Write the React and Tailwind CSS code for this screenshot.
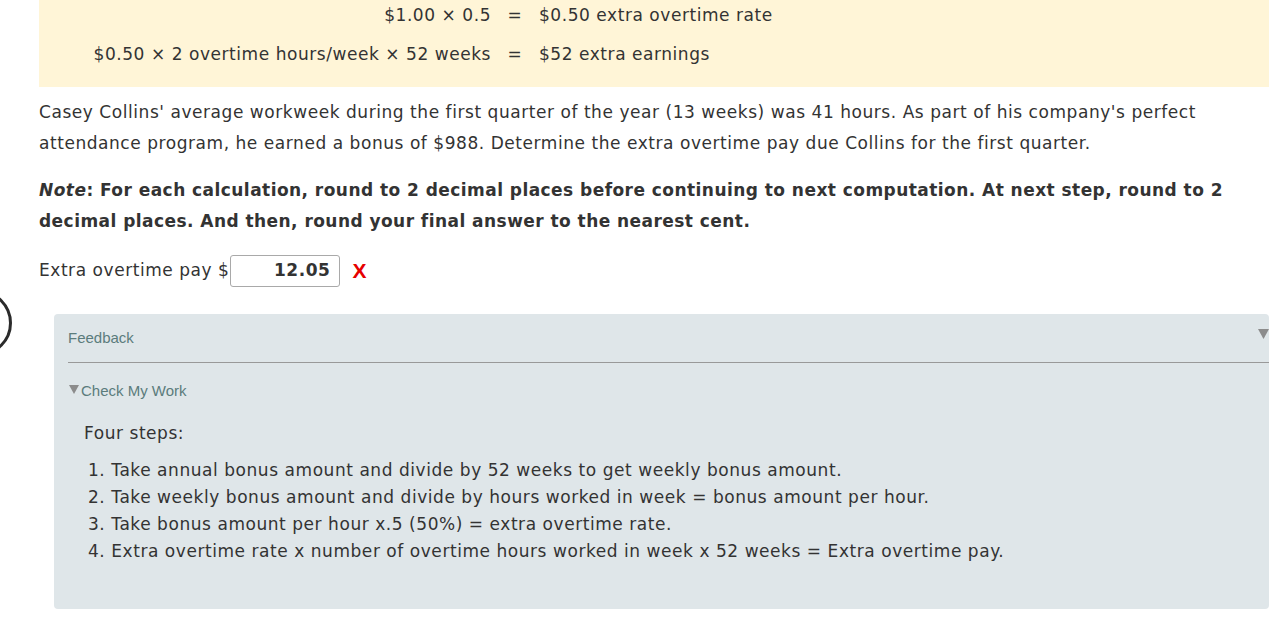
export default function App() {
  const v = { fontFamily: '"DejaVu Sans", Verdana, sans-serif' };
  const a = { fontFamily: '"Liberation Sans", Arial, sans-serif' };
  return (
    <div className="relative w-[1269px] h-[618px] overflow-hidden bg-white text-[#333] tracking-[0.55px]" style={v}>
      <div className="ml-[39px] h-[87px] bg-[#fff5d7] pt-[4px] text-[17px]">
        <div className="grid grid-cols-[452px_48px_auto] gap-y-[17px] leading-[22px]">
          <div className="text-right">$1.00 × 0.5</div>
          <div className="text-center">=</div>
          <div>$0.50 extra overtime rate</div>
          <div className="text-right">$0.50 × 2 overtime hours/week × 52 weeks</div>
          <div className="text-center">=</div>
          <div>$52 extra earnings</div>
        </div>
      </div>
      <div className="pl-[39px] pr-[30px] text-[17px]">
        <p className="mt-[10px] leading-[31px]">
          Casey Collins' average workweek during the first quarter of the year (13 weeks) was 41 hours. As part of his company's perfect attendance program, he earned a bonus of $988. Determine the extra overtime pay due Collins for the first quarter.
        </p>
        <p className="mt-[16px] leading-[31px] font-bold tracking-[0.45px]">
          <em>Note</em>: For each calculation, round to 2 decimal places before continuing to next computation. At next step, round to 2 decimal places. And then, round your final answer to the nearest cent.
        </p>
        <div className="mt-[18px] flex items-center h-[32px]">
          <span>Extra overtime pay $</span>
          <div className="w-[110px] h-[32px] border border-[#a9a9a9] rounded-[3px] flex items-center justify-end pr-[8px] font-bold">12.05</div>
          <span className="ml-[13px] text-[#e60000] font-bold text-[21px] tracking-normal" style={a}>X</span>
        </div>
      </div>
      <div className="absolute left-[-54px] top-[290px] w-[66px] h-[66px] rounded-full border-[3px] border-[#2b2b2b]"></div>
      <div className="ml-[54px] mt-[27px] h-[295px] bg-[#dfe6e9] rounded-[4px] pl-[14px] pt-[14px]">
        <div className="flex items-center justify-between h-[20px] text-[15px] tracking-normal text-[#5b7c7c]" style={a}>
          <span>Feedback</span>
          <svg width="11" height="10" viewBox="0 0 11 10" className="mr-0 mt-[-9px]">
            <polygon points="0,0 11,0 5.5,10" fill="#8c8c8c" />
          </svg>
        </div>
        <div className="mt-[14px] border-t border-[#999]"></div>
        <div className="mt-[18px] flex items-center text-[15px] tracking-normal text-[#5b7c7c] h-[20px]" style={a}>
          <svg width="10" height="9" viewBox="0 0 10 9" className="mr-[2px] ml-[1px] mt-[-4px]">
            <polygon points="0,0 10,0 5,9" fill="#8c8c8c" />
          </svg>
          <span>Check My Work</span>
        </div>
        <div className="pl-[16px] text-[17px]">
          <div className="mt-[21px] leading-[22px]">Four steps:</div>
          <ol className="mt-[13px] pl-[4px] leading-[27px]">
            <li>1. Take annual bonus amount and divide by 52 weeks to get weekly bonus amount.</li>
            <li>2. Take weekly bonus amount and divide by hours worked in week = bonus amount per hour.</li>
            <li>3. Take bonus amount per hour x.5 (50%) = extra overtime rate.</li>
            <li>4. Extra overtime rate x number of overtime hours worked in week x 52 weeks = Extra overtime pay.</li>
          </ol>
        </div>
      </div>
    </div>
  );
}
